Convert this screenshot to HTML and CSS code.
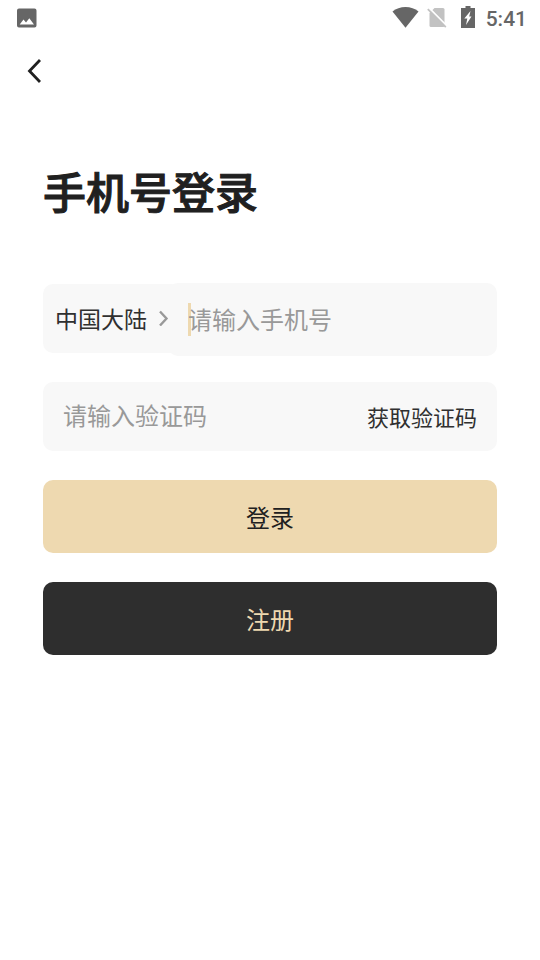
FILE: index.html
```html
<!DOCTYPE html>
<html lang="zh-CN">
<head>
<meta charset="utf-8">
<meta name="viewport" content="width=device-width, initial-scale=1">
<title>手机号登录</title>
<link rel="stylesheet" href="styles.css">
</head>
<body>
<header class="status">
  <svg class="status-photo" width="20" height="20" viewBox="0 0 20 20" aria-hidden="true">
    <path fill="#666" fill-rule="evenodd" d="M2 .5h15.500a2 2 0 0 1 2 2v15a2 2 0 0 1-2 2h-15.500a2 2 0 0 1-2-2v-15a2 2 0 0 1 2-2zM2.700 16.500h14.300l-4.700-6.300-3.300 4.300-2.500-3z"/>
  </svg>
  <div class="status-right">
    <svg class="wifi" width="27" height="21" viewBox="0 0 27 21" aria-hidden="true">
      <path fill="#666" d="M.5 4.500C4 1.700 8.500 0 13.500 0s9.500 1.700 13 4.500L13.500 20.700z"/>
    </svg>
    <svg class="sim" width="20" height="21" viewBox="0 0 20 21" aria-hidden="true">
      <path fill="#c2c2c2" d="M7.500 1h8.500a1.500 1.500 0 0 1 1.500 1.500v16a1.500 1.500 0 0 1-1.500 1.500H4a1.500 1.500 0 0 1-1.500-1.500V6z"/>
      <path fill="none" stroke="#fff" stroke-width="1.800" d="M2 1l18 18"/>
      <path fill="none" stroke="#c2c2c2" stroke-width="1.800" d="M.8 2.200l18 18"/>
    </svg>
    <svg class="battery" width="14" height="22" viewBox="0 0 14 22" aria-hidden="true">
      <path fill="#666" d="M4.500 0h5v2H14v20H0V2h4.500z"/>
      <path fill="#fff" d="M9.500 5L3.300 12.500h3L5 19l5.500-8.500H8.200z"/>
    </svg>
    <time class="clock">5:41</time>
  </div>
</header>
<nav class="nav">
  <button class="back" type="button" aria-label="返回">
    <svg width="14" height="24" viewBox="0 0 14 24" aria-hidden="true"><path fill="none" stroke="#202020" stroke-width="2.800" d="M13 1L2.500 12l10.500 11"/></svg>
  </button>
</nav>
<main class="page">
  <h1 class="title">手机号登录</h1>
  <form class="form">
    <div class="phone-row">
      <button class="region" type="button">
        <span>中国大陆</span>
        <svg width="10" height="16" viewBox="0 0 10 16" aria-hidden="true"><path fill="none" stroke="#999" stroke-width="2.400" d="M1 1.500l6.500 7L1 15.500"/></svg>
      </button>
      <div class="phone">
        <span class="caret"></span>
        <input class="input" type="tel" placeholder="请输入手机号" aria-label="手机号">
      </div>
    </div>
    <div class="code-row">
      <input class="input" type="text" placeholder="请输入验证码" aria-label="验证码">
      <button class="send" type="button">获取验证码</button>
    </div>
    <button class="action login" type="submit">登录</button>
    <button class="action register" type="button">注册</button>
  </form>
</main>
</body>
</html>
```
FILE: styles.css
```css
* {
  box-sizing: border-box;
}

body {
  margin: 0;
  background: #fff;
  color: #202020;
  font-family: "Noto Sans CJK SC", sans-serif;
}

button,
input {
  margin: 0;
  padding: 0;
  border: 0;
  background: none;
  color: inherit;
  font: inherit;
}

svg {
  display: block;
  flex: none;
}

.status {
  display: flex;
  justify-content: space-between;
  align-items: flex-start;
  height: 36px;
  padding: 6px 13px 0 17px;
}

.status-photo {
  margin-top: 2px;
}

.status-right {
  display: flex;
  align-items: flex-start;
}

.wifi {
  margin: 1px 8px 0 0;
}

.sim {
  margin: 1px 14px 0 0;
}

.battery {
  margin-right: 11px;
}

.clock {
  color: #666;
  font: 500 21px/26px Roboto, sans-serif;
}

.nav {
  display: flex;
  height: 70px;
  padding: 0 16px;
}

.back {
  display: flex;
  align-items: center;
  justify-content: center;
  width: 36px;
  height: 70px;
}

.page {
  padding: 52px 43px 0;
}

.title {
  margin: 0 0 61px;
  font-size: 43px;
  line-height: 64px;
  font-weight: 500;
  -webkit-text-stroke: 1px #202020;
}

.form {
  display: flex;
  flex-direction: column;
}

.phone-row {
  display: flex;
  align-items: center;
  margin-bottom: 26px;
}

.region {
  display: flex;
  align-items: center;
  gap: 12px;
  height: 69px;
  margin: 0 -13px 2px 0;
  padding: 0 12px 2px;
  border-radius: 10px;
  background: #f8f8f8;
  color: #303030;
  font-size: 23px;
  white-space: nowrap;
}

.phone {
  display: flex;
  flex: 1;
  align-items: center;
  min-width: 0;
  height: 73px;
  padding: 0 20px;
  border-radius: 10px;
  background: #f8f8f8;
}

.caret {
  flex: none;
  width: 3px;
  height: 33px;
  margin-right: -3px;
  background: #eed9b0;
}

.input {
  flex: 1;
  min-width: 0;
  height: 36px;
  padding-bottom: 2px;
  outline: 0;
  font-size: 24px;
}

.input::placeholder {
  color: #999;
  opacity: 1;
}

.code-row {
  display: flex;
  align-items: center;
  height: 69px;
  margin-bottom: 29px;
  padding: 0 20px 2px;
  border-radius: 10px;
  background: #f8f8f8;
}

.send {
  color: #303030;
  font-size: 22px;
}

.action {
  height: 73px;
  margin-bottom: 29px;
  border-radius: 10px;
  font-size: 24px;
}

.login {
  background: #eed9b0;
}

.register {
  background: #2e2e2e;
  color: #eed9b0;
}
```
